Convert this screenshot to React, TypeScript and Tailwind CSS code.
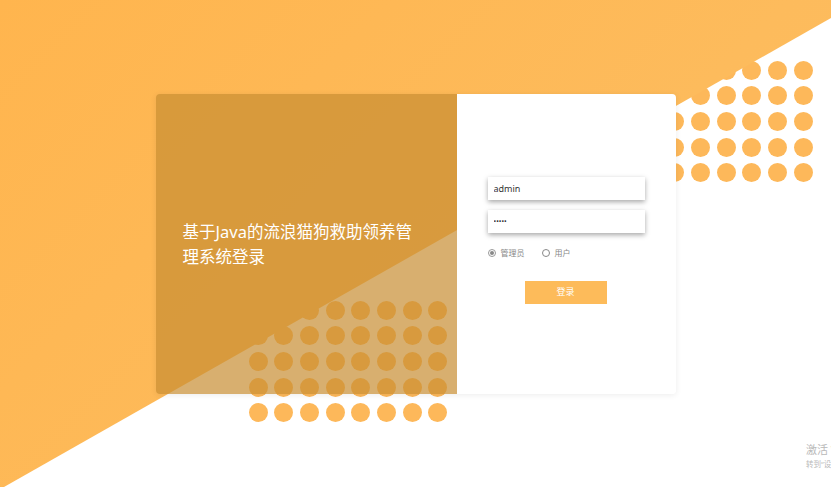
import React from "react";

const ROWS = [0, 1, 2, 3, 4];
const COLS = [0, 1, 2, 3, 4, 5, 6, 7];

function Dots({ className }: { className: string }) {
  return (
    <div className={`pointer-events-none absolute grid grid-cols-8 gap-[6.7px] ${className}`}>
      {ROWS.map((r) =>
        COLS.map((c) => (
          <span key={`${r}-${c}`} className="block h-[19px] w-[19px] rounded-full bg-[#fdb85a]" />
        ))
      )}
    </div>
  );
}

export default function App() {
  return (
    <div
      className="relative flex h-[487px] w-full items-center justify-center overflow-hidden bg-white"
      style={{ fontFamily: '"Noto Sans", "Noto Sans CJK SC", sans-serif' }}
    >
      {/* dot fields sit under the orange diagonal */}
      <Dots className="left-[248.5px] top-[300.5px]" />
      <Dots className="left-[614px] top-[60.5px]" />

      {/* orange diagonal */}
      <div className="pointer-events-none absolute inset-0 bg-[linear-gradient(135deg,#ffb54e_0%,#fdbb5c_60%,#fdbe60_100%)] [clip-path:polygon(0_0,100%_0,100%_18px,4px_100%,0_100%)]" />

      {/* activation watermark */}
      <div className="pointer-events-none absolute left-[806px] top-[442px] whitespace-nowrap text-[#b9b9b9]">
        <p className="text-[11px] leading-[16px]">激活 Windows</p>
        <p className="text-[7.5px] leading-[12px]">转到“设置”以激活 Windows。</p>
      </div>

      {/* card */}
      <div className="relative flex h-[300px] w-[520px] rounded-[4px] shadow-[0_1px_6px_rgba(0,0,0,0.08)]">
        <div className="flex w-[301px] items-center rounded-l-[4px] bg-[rgba(200,141,50,0.7)] pl-[27px]">
          <h1 className="w-[240px] text-[16.5px] leading-[25px] text-white">
            基于Java的流浪猫狗救助领养管理系统登录
          </h1>
        </div>

        <div className="flex flex-1 flex-col rounded-r-[4px] bg-white pl-[31px] pr-[31px] pt-[83px]">
          <input
            readOnly
            value="admin"
            className="h-[23px] w-[157px] bg-white px-[6px] text-[9px] text-[#333] shadow-[0_2px_5px_rgba(0,0,0,0.35)] outline-none"
          />
          <input
            readOnly
            type="password"
            value="admin"
            className="mt-[10px] h-[23px] w-[157px] bg-white px-[6px] text-[7px] text-[#333] shadow-[0_2px_5px_rgba(0,0,0,0.35)] outline-none"
          />

          <div className="mt-[14px] flex items-center text-[8px] text-[#888]">
            <span className="flex h-[8px] w-[8px] items-center justify-center rounded-full border border-[#999] bg-white">
              <span className="h-[4px] w-[4px] rounded-full bg-[#888]" />
            </span>
            <span className="ml-[5px]">管理员</span>
            <span className="ml-[17px] h-[8px] w-[8px] rounded-full border border-[#888] bg-white" />
            <span className="ml-[5px]">用户</span>
          </div>

          <button className="ml-[37px] mt-[22px] h-[23px] w-[82px] bg-[#fdbb5a] text-[9px] text-white">
            登录
          </button>
        </div>
      </div>
    </div>
  );
}
